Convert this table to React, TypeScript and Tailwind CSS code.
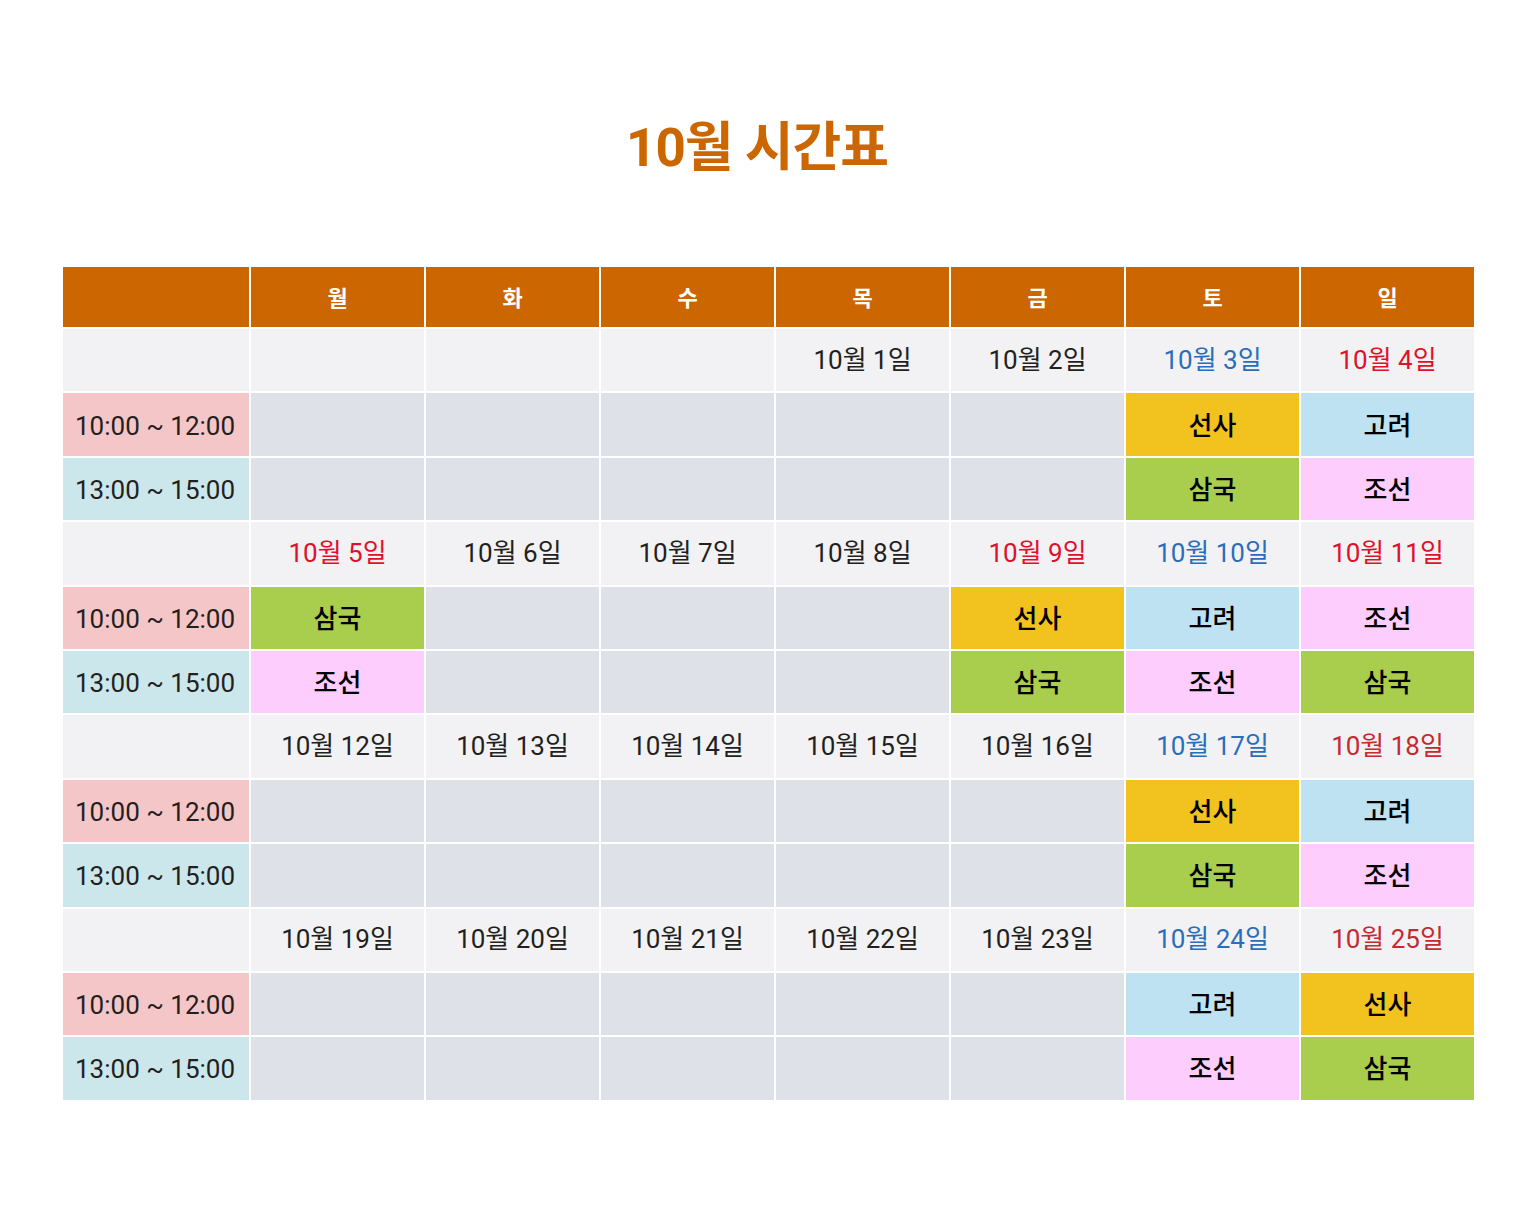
import React from 'react';

type Subject = '선사' | '삼국' | '고려' | '조선' | null;

const SUBJECT_BG: Record<string, string> = {
  선사: 'bg-[#f2c21e]',
  삼국: 'bg-[#a9cd4d]',
  고려: 'bg-[#bee2f1]',
  조선: 'bg-[#fccdfd]',
};

type DateCell = { label: string; tone?: 'blue' | 'red' | 'darkred' } | null;

type Week = {
  dates: DateCell[];
  am: Subject[];
  pm: Subject[];
};

const DAYS = ['월', '화', '수', '목', '금', '토', '일'];

const WEEKS: Week[] = [
  {
    dates: [null, null, null, { label: '10월 1일' }, { label: '10월 2일' }, { label: '10월 3일', tone: 'blue' }, { label: '10월 4일', tone: 'red' }],
    am: [null, null, null, null, null, '선사', '고려'],
    pm: [null, null, null, null, null, '삼국', '조선'],
  },
  {
    dates: [
      { label: '10월 5일', tone: 'red' },
      { label: '10월 6일' },
      { label: '10월 7일' },
      { label: '10월 8일' },
      { label: '10월 9일', tone: 'red' },
      { label: '10월 10일', tone: 'blue' },
      { label: '10월 11일', tone: 'red' },
    ],
    am: ['삼국', null, null, null, '선사', '고려', '조선'],
    pm: ['조선', null, null, null, '삼국', '조선', '삼국'],
  },
  {
    dates: [
      { label: '10월 12일' },
      { label: '10월 13일' },
      { label: '10월 14일' },
      { label: '10월 15일' },
      { label: '10월 16일' },
      { label: '10월 17일', tone: 'blue' },
      { label: '10월 18일', tone: 'darkred' },
    ],
    am: [null, null, null, null, null, '선사', '고려'],
    pm: [null, null, null, null, null, '삼국', '조선'],
  },
  {
    dates: [
      { label: '10월 19일' },
      { label: '10월 20일' },
      { label: '10월 21일' },
      { label: '10월 22일' },
      { label: '10월 23일' },
      { label: '10월 24일', tone: 'blue' },
      { label: '10월 25일', tone: 'darkred' },
    ],
    am: [null, null, null, null, null, '고려', '선사'],
    pm: [null, null, null, null, null, '조선', '삼국'],
  },
];

const toneClass = (tone?: string) => {
  if (tone === 'blue') return 'text-[#2a6ebb]';
  if (tone === 'red') return 'text-[#e0102a]';
  if (tone === 'darkred') return 'text-[#c42a30]';
  return 'text-[#231f20]';
};

const App: React.FC = () => {
  return (
    <div
      className="min-h-[1212px] bg-white"
      style={{ fontFamily: 'Roboto, "Noto Sans CJK KR", "Noto Sans", sans-serif' }}
    >
      <h1 className="pt-[111px] pr-[23px] text-center text-[53px] leading-[74px] font-bold tracking-[-1px] text-[#cc6600]">
        10월 시간표
      </h1>

      <div className="mx-auto mt-[82px] grid w-[1411px] grid-cols-[186px_repeat(7,1fr)] gap-[2px]">
        {/* 요일 헤더 */}
        <div className="h-[60px] bg-[#cc6600]" />
        {DAYS.map(d => (
          <div key={d} className="flex h-[60px] items-center justify-center bg-[#cc6600] pt-[2px] text-[22px] font-bold text-white">
            {d}
          </div>
        ))}

        {WEEKS.map((w, wi) => (
          <React.Fragment key={wi}>
            <div className="h-[62.4px] bg-[#f2f2f4]" />
            {w.dates.map((c, i) => (
              <div
                key={`d${i}`}
                className={`flex h-[62.4px] items-center justify-center bg-[#f2f2f4] text-[26px] ${toneClass(c?.tone)}`}
              >
                {c?.label}
              </div>
            ))}

            <div className="flex h-[62.4px] items-center bg-[#f5c6c8] pt-[3px] pl-3 text-[26px] text-[#231f20]">10:00 ~ 12:00</div>
            {w.am.map((s, i) => (
              <div
                key={`a${i}`}
                className={`flex h-[62.4px] items-center justify-center pt-[3px] text-[26px] font-medium text-black ${s ? SUBJECT_BG[s] : 'bg-[#dee1e8]'}`}
              >
                {s}
              </div>
            ))}

            <div className="flex h-[62.4px] items-center bg-[#cce7ec] pt-[3px] pl-3 text-[26px] text-[#231f20]">13:00 ~ 15:00</div>
            {w.pm.map((s, i) => (
              <div
                key={`p${i}`}
                className={`flex h-[62.4px] items-center justify-center pt-[3px] text-[26px] font-medium text-black ${s ? SUBJECT_BG[s] : 'bg-[#dee1e8]'}`}
              >
                {s}
              </div>
            ))}
          </React.Fragment>
        ))}
      </div>
    </div>
  );
};

export default App;
